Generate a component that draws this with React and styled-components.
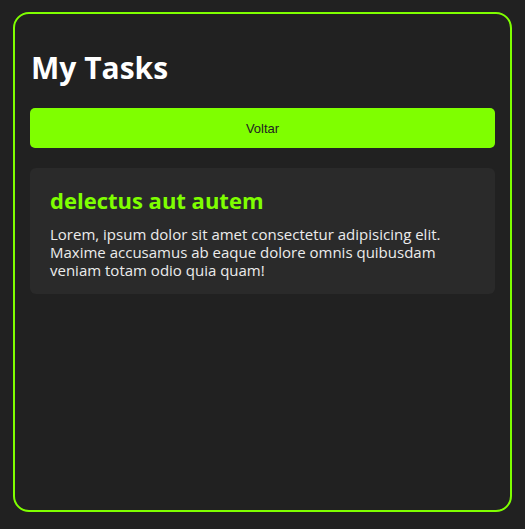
import styled, { createGlobalStyle } from "styled-components";

const GlobalStyle = createGlobalStyle`
  * { box-sizing: border-box; }
  html, body {
    margin: 0;
    background: #212121;
  }
  body {
    padding: 12px 13px;
    font-family: "Segoe UI", "Open Sans", sans-serif;
  }
`;

const Panel = styled.div`
  width: 499px;
  height: 500px;
  border: 2px solid #7fff00;
  border-radius: 16px;
  padding: 16px 15px;
  display: flex;
  flex-direction: column;
`;

const Title = styled.h1`
  margin: 16px 0 18px 1px;
  font-size: 30px;
  line-height: 44px;
  font-weight: 700;
  color: #fff;
`;

const BackButton = styled.button`
  height: 40px;
  width: 100%;
  border: none;
  border-radius: 5px;
  background: #7fff00;
  color: #222;
  font-family: "Liberation Sans", Arial, sans-serif;
  font-size: 13px;
  cursor: pointer;
`;

const TaskList = styled.div`
  margin-top: 20px;
  display: flex;
  flex-direction: column;
  gap: 16px;
`;

const TaskCard = styled.div`
  background: #2a2a2a;
  border-radius: 6px;
  padding: 17px 20px 15px;
`;

const TaskTitle = styled.h2`
  margin: 0 0 10px;
  font-size: 22px;
  line-height: 30px;
  font-weight: 700;
  color: #7fff00;
`;

const TaskText = styled.p`
  margin: 0;
  font-size: 15px;
  line-height: 18px;
  color: #ececec;
`;

const tasks = [
  {
    id: 1,
    title: "delectus aut autem",
    body: "Lorem, ipsum dolor sit amet consectetur adipisicing elit. Maxime accusamus ab eaque dolore omnis quibusdam veniam totam odio quia quam!",
  },
];

export default function App() {
  return (
    <>
      <GlobalStyle />
      <Panel>
        <Title>My Tasks</Title>
        <BackButton>Voltar</BackButton>
        <TaskList>
          {tasks.map((t) => (
            <TaskCard key={t.id}>
              <TaskTitle>{t.title}</TaskTitle>
              <TaskText>{t.body}</TaskText>
            </TaskCard>
          ))}
        </TaskList>
      </Panel>
    </>
  );
}
